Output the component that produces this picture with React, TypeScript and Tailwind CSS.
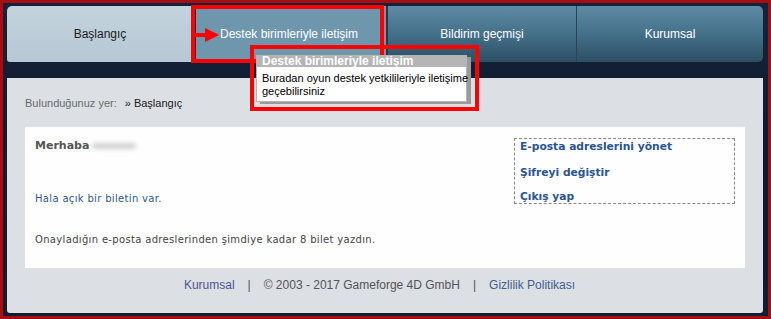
import React from "react";

export default function App() {
  const arial = { fontFamily: '"Liberation Sans", Arial, sans-serif' };
  const verd = { fontFamily: '"DejaVu Sans", Verdana, sans-serif' };
  return (
    <div className="relative w-[771px] h-[319px] bg-[#a50f14] p-[3px] overflow-hidden" style={arial}>
      <div className="w-full h-full bg-gradient-to-b from-[#15233a] via-[#0f1a2c] to-[#121d2e] pt-[3px] pl-[4px] pr-[5px] pb-[3px] flex flex-col">
        {/* tabs */}
        <div className="flex h-[56px] w-[756px] text-[12px]">
          <div className="w-[186px] rounded-tl-[5px] rounded-bl-[3px] bg-gradient-to-b from-[#c3d3de] to-[#b6c8d4] flex items-center justify-center text-[#1c1c1c]">
            Başlangıç
          </div>
          <div className="w-[3px] bg-[#1a2a3c]" />
          <div className="w-[190px] bg-[#6e96ad] flex items-center justify-center text-white pr-[4px]">
            Destek birimleriyle iletişim
          </div>
          <div className="w-[2px] bg-[#24384a]" />
          <div className="w-[188px] bg-gradient-to-b from-[#5d8aa4] via-[#45708a] to-[#2c4f63] flex items-center justify-center text-white">
            Bildirim geçmişi
          </div>
          <div className="w-[1px] bg-[#2a4255]" />
          <div className="w-[186px] rounded-tr-[5px] rounded-br-[5px] bg-gradient-to-b from-[#5d8aa4] via-[#45708a] to-[#2c4f63] flex items-center justify-center text-white">
            Kurumsal
          </div>
        </div>
        <div className="h-[16px]" />
        {/* content panel */}
        <div className="flex-1 w-[756px] bg-[#dcdfe3] rounded-b-[3px] flex flex-col px-[18px]">
          <div className="h-[49px] flex items-center text-[11px] pt-[1px]">
            <span className="text-[#6b6b6b]">Bulunduğunuz yer:</span>
            <span className="ml-[8px] text-[#1a1a1a]">» Başlangıç</span>
          </div>
          <div className="bg-[#fefefe] h-[141px] w-[720px] flex pl-[10px] pt-[11px] text-[10px]" style={verd}>
            <div className="flex-1 flex flex-col">
              <div className="h-[16px] flex items-center font-bold text-[#555555] text-[11px]">
                Merhaba
                <span className="ml-[3px] inline-block w-[44px] h-[6px] bg-[#d2d2d2] blur-[2px] rounded" />
              </div>
              <div className="h-[36px]" />
              <div className="h-[16px] flex items-center text-[#2c5a8e] tracking-[0.33px]">Hala açık bir biletin var.</div>
              <div className="h-[25px]" />
              <div className="h-[16px] flex items-center text-[#444444] tracking-[0.33px]">
                Onayladığın e-posta adreslerinden şimdiye kadar 8 bilet yazdın.
              </div>
            </div>
            <div className="w-[221px] h-[66px] mr-[10px] border border-dashed border-[#8a8a8a] flex flex-col font-bold text-[#2b5592] pl-[5px] text-[10.7px]">
              <div className="h-[16px] flex items-center">E-posta adreslerini yönet</div>
              <div className="h-[10px]" />
              <div className="h-[16px] flex items-center">Şifreyi değiştir</div>
              <div className="h-[10px]" />
              <div className="h-[12px] flex items-center">Çıkış yap</div>
            </div>
          </div>
          <div className="h-[34px] flex items-center justify-center text-[12px] text-[#555555] pr-[11px]">
            <span className="text-[#4a5791]">Kurumsal</span>
            <span className="mx-[13px]">|</span>
            <span>© 2003 - 2017 Gameforge 4D GmbH</span>
            <span className="mx-[13px]">|</span>
            <span className="text-[#3f5f91]">Gizlilik Politikası</span>
          </div>
        </div>
      </div>

      {/* red annotation around tab */}
      <div className="absolute left-[191px] top-[5px] w-[193px] h-[58px] border-[4px] border-[#ff0000]" />
      <div className="absolute left-[195px] top-[33px] w-[12px] h-[4px] bg-[#ff0000]" />
      <div className="absolute left-[205px] top-[28px] w-0 h-0 border-y-[7px] border-y-transparent border-l-[14px] border-l-[#ff0000]" />

      {/* tooltip */}
      <div className="absolute left-[256px] top-[55px] w-[211px] bg-[#b5b5b5] shadow-[4px_2px_0_#9a9a9a] px-[1px] pb-[1px]">
        <div className="h-[12px] flex items-center pl-[5px] font-bold text-white leading-none text-[12px]">Destek birimleriyle iletişim</div>
        <div className="bg-white text-black pl-[5px] pt-[5px] pb-[3px] leading-[13px] whitespace-nowrap text-[11px]">
          Buradan oyun destek yetkilileriyle iletişime
          <br />
          geçebilirsiniz
        </div>
      </div>
      <div className="absolute left-[250px] top-[45px] w-[229px] h-[66px] border-[4px] border-[#ff0000]" />
    </div>
  );
}
